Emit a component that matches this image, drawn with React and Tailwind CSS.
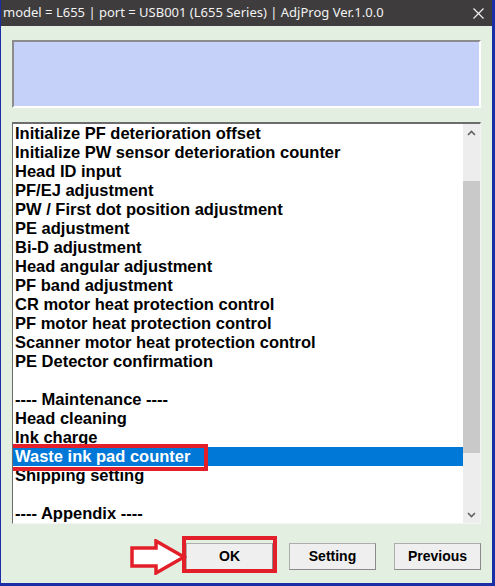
import React from 'react';

const ITEMS = [
  'Initialize PF deterioration offset',
  'Initialize PW sensor deterioration counter',
  'Head ID input',
  'PF/EJ adjustment',
  'PW / First dot position adjustment',
  'PE adjustment',
  'Bi-D adjustment',
  'Head angular adjustment',
  'PF band adjustment',
  'CR motor heat protection control',
  'PF motor heat protection control',
  'Scanner motor heat protection control',
  'PE Detector confirmation',
  '',
  '---- Maintenance ----',
  'Head cleaning',
  'Ink charge',
  'Waste ink pad counter',
  'Shipping setting',
  '',
  '---- Appendix ----',
];

const SELECTED = 'Waste ink pad counter';

function WinButton({ children }) {
  return (
    <button className="h-[27px] w-[87px] border border-[#adadad] border-r-[#8a8a8a] border-b-[#8a8a8a] bg-[#efefef] text-[14px] font-bold text-black">
      {children}
    </button>
  );
}

function Scrollbar() {
  return (
    <div className="flex w-[17px] flex-col bg-[#ededed]">
      <div className="flex h-[17px] items-center justify-center">
        <svg width="9" height="6" viewBox="0 0 9 6">
          <path d="M1 5 L4.5 1.5 L8 5" fill="none" stroke="#606060" strokeWidth="1.6" />
        </svg>
      </div>
      <div className="mt-[40px] h-[272px] bg-[#c9c9c9]" />
      <div className="flex-1" />
      <div className="flex h-[17px] items-center justify-center">
        <svg width="9" height="6" viewBox="0 0 9 6">
          <path d="M1 1 L4.5 4.5 L8 1" fill="none" stroke="#606060" strokeWidth="1.6" />
        </svg>
      </div>
    </div>
  );
}

export default function App() {
  return (
    <div className="flex h-[586px] w-[495px] flex-col border-l border-r-[3px] border-b-[3px] border-[#1b2ea6] bg-[#e3efe1] font-['Liberation_Sans',Arial,sans-serif]">
      {/* title bar */}
      <div className="flex h-[26px] items-center justify-between bg-[#3e3c3d] pl-[2px] pr-[8px]">
        <span className="font-['Noto_Sans',sans-serif] text-[13px] text-[#f2f2f2]">
          model = L655 | port = USB001 (L655 Series) | AdjProg Ver.1.0.0
        </span>
        <svg width="11" height="11" viewBox="0 0 11 11">
          <path d="M0.5 0.5 L10.5 10.5 M10.5 0.5 L0.5 10.5" stroke="#f0f0f0" strokeWidth="1.2" />
        </svg>
      </div>

      <div className="flex flex-1 flex-col px-[11px]">
        {/* message box */}
        <div className="mt-[14px] h-[68px] border-[2px] border-t-[#8c8c8c] border-l-[#8c8c8c] border-r-white border-b-white bg-[#c6d1fa]" />

        {/* list */}
        <div className="mt-[14px] flex h-[402px] border-t-[2px] border-l border-t-[#6d6d6d] border-l-[#6d6d6d] border-r border-b border-r-[#f4f4f4] border-b-[#f4f4f4] bg-white">
          <div className="flex-1 overflow-hidden">
            {ITEMS.map((item, i) =>
              item === SELECTED ? (
                <div key={i} className="relative h-[19px] bg-[#0078d7] pl-[2px] text-[16.5px] font-bold leading-[19px] text-white">
                  {item}
                  <div className="pointer-events-none absolute left-[-8px] top-[-3px] h-[27px] w-[203px] border-[4px] border-[#e3202a]" />
                </div>
              ) : (
                <div key={i} className="h-[19px] whitespace-nowrap pl-[2px] text-[16.5px] font-bold leading-[19px] text-black">
                  {item}
                </div>
              )
            )}
          </div>
          <Scrollbar />
        </div>

        {/* buttons */}
        <div className="mt-[19px] flex justify-end pr-[-1px]">
          <div className="relative mr-[16px]">
            <WinButton>OK</WinButton>
            <div className="pointer-events-none absolute left-[-4px] top-[-7px] h-[37px] w-[95px] border-[4px] border-[#e3202a]" />
            <svg className="absolute left-[-56px] top-[-4px]" width="57" height="36" viewBox="0 0 57 36">
              <path d="M2 9 L26 9 L26 2 L54 18 L26 34 L26 27 L2 27 Z" fill="#ffffff" stroke="#e3202a" strokeWidth="3.5" strokeLinejoin="miter" />
            </svg>
          </div>
          <div className="mr-[18px]">
            <WinButton>Setting</WinButton>
          </div>
          <WinButton>Previous</WinButton>
        </div>
      </div>
    </div>
  );
}
